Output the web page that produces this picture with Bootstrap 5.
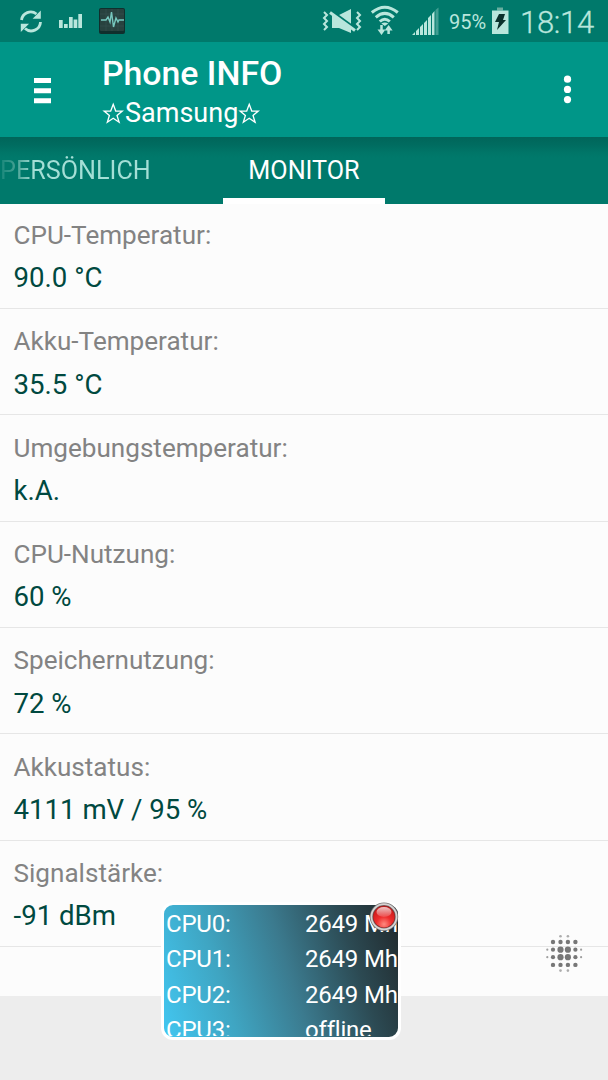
<!DOCTYPE html>
<html lang="de">
<head>
<meta charset="utf-8">
<meta name="viewport" content="width=device-width, initial-scale=1">
<title>Phone INFO</title>
<link rel="stylesheet" href="https://cdn.jsdelivr.net/npm/bootstrap@5.3.0/dist/css/bootstrap.min.css">
<style>
body{font-family:Roboto,"Liberation Sans",sans-serif;background:#ededed;min-height:1080px;overflow:hidden}
svg{display:block;flex:none}
.status{height:42px;background:#00796b;color:#b9e6dc;padding-left:18px}
.meter-icon{margin-left:13px}
.pulse-icon{margin-left:15px}
.wifi-icon{margin-left:8px}
.signal-icon{margin-left:11px}
.batt-icon{margin-left:4px}
.pct{font-size:20px;line-height:42px;margin-left:10px;width:38px;padding-top:1px}
.clock{font-size:31px;font-weight:300;line-height:42px;margin-left:11px;padding-top:2px;letter-spacing:-.3px;width:88px;-webkit-text-stroke:.3px #b9e6dc}
.appbar{height:95px;background:#009688;color:#fff}
.menu-btn{width:102px;padding:36px 0 0 33px}
.app-title{font-size:33.800px;font-weight:500;line-height:40px;padding-top:12px}
.app-sub{font-size:27px;line-height:36px;margin-top:1px}
.star-l{margin-right:1px}
.more-btn{padding:33px 36px 0 0}
.tabs{height:67px;background:linear-gradient(#00665a,#006c60 8px,#007668 16px,#00796b 21px);font-size:25.200px;line-height:68px}
.tab-prev{width:223px;color:transparent;background:linear-gradient(90deg,#17877a,#45a093 16px,#a4dfd6 34px);-webkit-background-clip:text;background-clip:text}
.tab-on{width:162px;height:67px;color:#fff;border-bottom:6px solid #fff}
.info-list{background:#fcfcfc;height:792px}
.info-row{height:106.330px;border-bottom:1px solid #e6e6e6;padding:11.400px 0 0 13.500px}
.info-row:first-child{height:105px;padding-top:10px}
.lbl{font-size:26.100px;line-height:42px;color:#838383}
.val{font-size:27.600px;line-height:42px;color:#004940;padding-top:1.400px}
.widget{left:161px;top:902px;width:240px;height:138px;border:3px solid #fff;border-radius:12px;color:#fff;background:linear-gradient(72deg,#42c4ed 2%,#3fa5c2 27%,#3b7a8e 53%,#2c4a53 78%,#20282b 100%);font-size:24px;letter-spacing:-.2px;line-height:35.400px}
.cores{height:131px;padding:2px 0 0 2px;overflow:hidden;white-space:nowrap;font-variant-ligatures:none}
.core-name{width:139px;flex:none}
.led{left:368px;top:901px}
.dots{left:545px;top:934px}
</style>
</head>
<body class="position-relative">
<header>
  <div class="status d-flex">
    <svg width="27" height="42" fill="none" stroke="#b9e6dc" stroke-width="2.800"><path d="M3.500 20A9.300 9.300 0 0 1 18.500 14M22.500 22A9.300 9.300 0 0 1 7 28.500"/><path d="M22.800 10.500v8.200h-8.200zM2.800 32v-8.200h8.200z" fill="#b9e6dc" stroke="none"/></svg>
    <svg class="meter-icon" width="25" height="42" fill="#b9e6dc"><path d="M1 20h3.700v8H1zM6 24h3.700v4H6zM11 17h3.700v11H11zM15.600 19.500h3.700v8.500h-3.700zM20.300 14h3.700v14h-3.700z"/></svg>
    <svg class="pulse-icon" width="28" height="42"><rect x="1" y="8" width="26" height="26" rx="2" fill="#102f2d"/><rect x="2" y="9" width="24" height="22" rx="1" fill="#28423f"/><path d="M2 14h24M2 20h24M2 26h24M8 9v22M14 9v22M20 9v22" stroke="#365350" stroke-width=".6"/><path d="M3 20h5l2-3 2 5 1.500-10 2 15 2.500-9 2 4 1-2h5" fill="none" stroke="#76c7be" stroke-width="1.400"/></svg>
    <div class="ms-auto d-flex">
      <svg width="42" height="42" fill="none" stroke="#b9e6dc"><path d="M4 12l3 3-3 3 3 3-3 3 3 3-3 3M37 12l3 3-3 3 3 3-3 3 3 3-3 3" stroke-width="2"/><path d="M12 15h7L31 9v24l-12-5h-7z" fill="#b9e6dc" stroke="none"/><path d="M9 9.500l26 19" stroke="#00796b" stroke-width="3"/><path d="M10 12.500l25 18" stroke-width="3"/></svg>
      <svg class="wifi-icon" width="30" height="42" fill="none" stroke="#b9e6dc" stroke-width="3"><path d="M1.800 12.500Q14.800 2 27.800 12.500M5.800 17.300Q14.800 9.500 23.800 17.300M9.800 21.500Q14.800 17 19.800 21.500"/><path d="M14.800 26l-3.500-2.500q3.500-2 7 0z" fill="#b9e6dc" stroke="none"/><path d="M11.500 25v5M18.600 29v5" stroke-width="2.500"/><path d="M7.500 29.500h8l-4 5.500zM14.600 30.500h8l-4-5.500z" fill="#b9e6dc" stroke="none"/></svg>
      <svg class="signal-icon" width="28" height="42" fill="#b9e6dc"><path d="M1 35l3-3v3zM5 31l3-3v7H5zM9 27l3-3v11H9zM13 23l3-3v15h-3zM17 18l3-3v20h-3zM21 14l2.500-3v24H21z"/><path d="M24.500 10L27.500 7.500V35h-3z" opacity=".35"/></svg>
      <div class="pct">95%</div>
      <svg class="batt-icon" width="18" height="42"><path d="M6 7.500h6v3H6z" fill="#68ae9f"/><path d="M1 10.500h16.500v23.500H1z" fill="#b9e6dc"/><path d="M8 14h6l-2 6h3L6 30l2-8H4z" fill="#0b312c"/></svg>
      <div class="clock">18:14</div>
    </div>
  </div>
  <div class="appbar d-flex">
    <div class="menu-btn"><svg width="18" height="26" fill="#fff"><path d="M1 0h17v5H1zM1 10.300h17v5H1zM1 20.300h17v5H1z"/></svg></div>
    <div>
      <div class="app-title">Phone INFO</div>
      <div class="app-sub d-flex align-items-center"><svg class="star-l" width="22" height="24" viewBox="0 0 20 22" fill="none" stroke="#fff" stroke-width="1.200"><path id="star" d="M11.500 3l2.300 6.200h6l-4.800 4 1.900 6.300-5.400-3.700-5.400 3.700L8 13.200l-4.800-4h6z" transform="translate(-1.3)"/></svg><span>Samsung</span><svg width="22" height="24" viewBox="0 0 20 22" fill="none" stroke="#fff" stroke-width="1.200"><use href="#star"/></svg></div>
    </div>
    <div class="more-btn ms-auto"><svg width="9" height="30" fill="#fff"><circle cx="4.500" cy="4.200" r="3.600"/><circle cx="4.500" cy="14.400" r="3.600"/><circle cx="4.500" cy="24.600" r="3.600"/></svg></div>
  </div>
</header>
<nav class="tabs d-flex">
  <div class="tab-prev">PERSÖNLICH</div>
  <div class="tab-on text-center">MONITOR</div>
</nav>
<main class="info-list">
  <div class="info-row"><div class="lbl">CPU-Temperatur:</div><div class="val">90.0 °C</div></div>
  <div class="info-row"><div class="lbl">Akku-Temperatur:</div><div class="val">35.5 °C</div></div>
  <div class="info-row"><div class="lbl">Umgebungstemperatur:</div><div class="val">k.A.</div></div>
  <div class="info-row"><div class="lbl">CPU-Nutzung:</div><div class="val">60 %</div></div>
  <div class="info-row"><div class="lbl">Speichernutzung:</div><div class="val">72 %</div></div>
  <div class="info-row"><div class="lbl">Akkustatus:</div><div class="val">4111 mV / 95 %</div></div>
  <div class="info-row"><div class="lbl">Signalstärke:</div><div class="val">-91 dBm</div></div>
</main>
<aside class="widget position-absolute">
  <div class="cores">
    <div class="d-flex"><span class="core-name">CPU0:</span><span>2649 Mh</span></div>
    <div class="d-flex"><span class="core-name">CPU1:</span><span>2649 Mh</span></div>
    <div class="d-flex"><span class="core-name">CPU2:</span><span>2649 Mh</span></div>
    <div class="d-flex"><span class="core-name">CPU3:</span><span>offline</span></div>
  </div>
</aside>
<svg class="led position-absolute" width="32" height="32"><defs><radialGradient id="red" cx=".5" cy=".85" r=".8"><stop offset="0" stop-color="#ff8a80"/><stop offset=".45" stop-color="#ee2d2d"/><stop offset="1" stop-color="#c81818"/></radialGradient><linearGradient id="shine" x2="0" y2="1"><stop offset="0" stop-color="#fff" stop-opacity=".75"/><stop offset="1" stop-color="#fff" stop-opacity=".15"/></linearGradient></defs><circle cx="16" cy="15.800" r="12.700" fill="#8b2a2a" stroke="#777" stroke-width="3"/><circle cx="16" cy="15.800" r="12.600" fill="none" stroke="#d8d4d4" stroke-width="1.700"/><circle cx="16" cy="15.800" r="10.600" fill="url(#red)"/><ellipse cx="16" cy="11" rx="7.500" ry="5" fill="url(#shine)"/></svg>
<svg class="dots position-absolute" width="40" height="40" fill="#777"><g id="q"><circle cx="15.500" cy="15.700" r="3.100"/><circle cx="8" cy="15.700" r="2.100"/><circle cx="15.500" cy="8" r="2.200"/><circle cx="8" cy="8" r="2.200"/><circle cx="2.300" cy="15.700" r="1.100" opacity=".7"/><circle cx="15.500" cy="2.300" r="1.300" opacity=".6"/></g><use href="#q" transform="matrix(-1 0 0 1 38.400 0)"/><use href="#q" transform="matrix(1 0 0 -1 0 38.900)"/><use href="#q" transform="matrix(-1 0 0 -1 38.400 38.900)"/></svg>
<script src="https://cdn.jsdelivr.net/npm/bootstrap@5.3.0/dist/js/bootstrap.bundle.min.js"></script>
</body>
</html>
